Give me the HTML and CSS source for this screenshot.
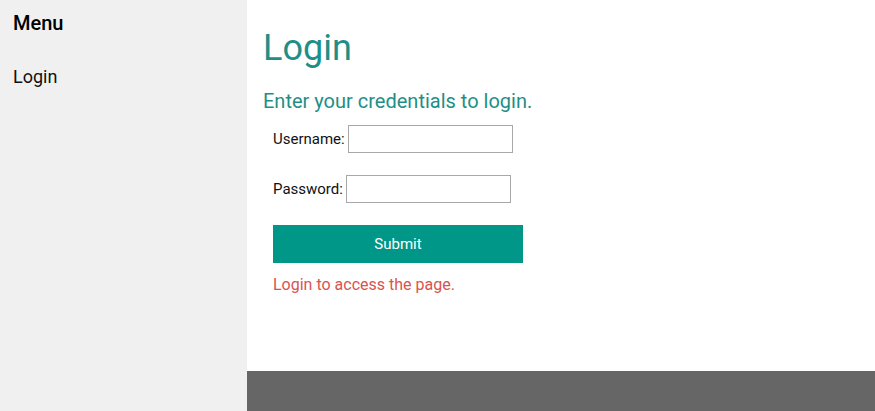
FILE: index.html
```html
<!DOCTYPE html>
<html>
<head>
<meta charset="utf-8">
<link rel="stylesheet" href="styles.css">
</head>
<body>
<div class="layout">
  <aside class="sidebar">
    <h3 class="menu-title">Menu</h3>
    <a class="menu-link" href="#">Login</a>
  </aside>
  <div class="main">
    <div class="content">
      <h1 class="title">Login</h1>
      <h2 class="subtitle">Enter your credentials to login.</h2>
      <form class="form">
        <div class="row"><label>Username:</label><input type="text" class="field"></div>
        <div class="row"><label>Password:</label><input type="password" class="field"></div>
        <button type="button" class="submit">Submit</button>
        <p class="error">Login to access the page.</p>
      </form>
    </div>
    <footer class="footer"></footer>
  </div>
</div>
</body>
</html>
```
FILE: styles.css
```css
html, body {
  margin: 0;
  padding: 0;
  height: 100%;
  font-family: Roboto, "Liberation Sans", sans-serif;
  background: #fff;
}
.layout {
  display: flex;
  height: 411px;
}
.sidebar {
  width: 247px;
  flex: none;
  background: #f0f0f0;
  padding: 0 13px;
  box-sizing: border-box;
  display: flex;
  flex-direction: column;
}
.menu-title {
  margin: 11px 0 0;
  font-size: 20px;
  font-weight: 500;
  color: #000;
  line-height: 24px;
}
.menu-link {
  margin-top: 31px;
  font-size: 18px;
  color: #111;
  text-decoration: none;
  line-height: 22px;
}
.main {
  flex: 1;
  display: flex;
  flex-direction: column;
}
.content {
  flex: 1;
  padding: 0 16px;
}
.title {
  margin: 27px 0 0;
  font-size: 36px;
  font-weight: 400;
  color: #1e8f86;
  line-height: 42px;
}
.subtitle {
  margin: 20px 0 0;
  font-size: 20px;
  font-weight: 400;
  color: #1e8f86;
  line-height: 24px;
}
.form {
  padding-left: 10px;
  margin-top: 12px;
}
.row {
  display: flex;
  align-items: center;
  height: 28px;
  margin-bottom: 22px;
  font-size: 15px;
  color: #111;
}
.row label {
  margin-right: 3px;
}
.field {
  width: 165px;
  height: 28px;
  box-sizing: border-box;
  border: 1px solid #a8a8a8;
  padding: 2px 4px;
  margin: 0;
  font-family: inherit;
}
.submit {
  display: block;
  width: 250px;
  height: 38px;
  background: #009688;
  color: #fff;
  border: none;
  font-family: inherit;
  font-size: 15px;
  margin: 0;
}
.error {
  margin: 12px 0 0;
  font-size: 16px;
  color: #d9534f;
  line-height: 20px;
}
.footer {
  height: 40px;
  background: #666;
  flex: none;
}
```
